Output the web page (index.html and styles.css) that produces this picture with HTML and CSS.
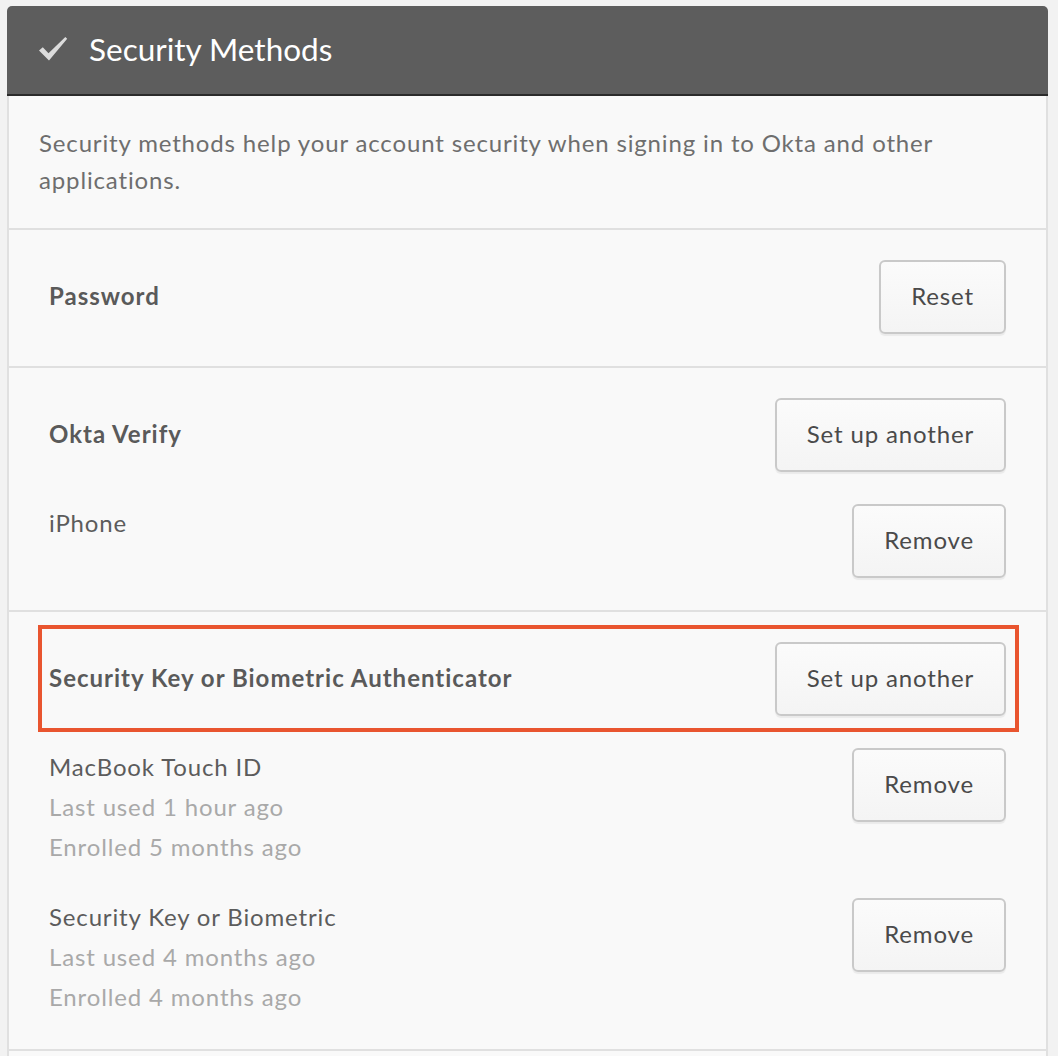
FILE: index.html
```html
<!DOCTYPE html>
<html lang="en">
<head>
<meta charset="utf-8">
<title>Security Methods</title>
<link rel="stylesheet" href="styles.css">
</head>
<body>
<div class="card">
  <div class="card-header">
    <svg class="check" width="30" height="26" viewBox="0 0 30 26" aria-hidden="true">
      <path d="M1 14.5 L4.8 11.3 L10.5 17.2 L27.3 1 L29.2 2.8 L11 24.5 Z" fill="#dcdcdc"/>
    </svg>
    <h2 class="card-title">Security Methods</h2>
  </div>
  <div class="card-body">
    <div class="section intro">
      <p class="intro-text">Security methods help your account security when signing in to Okta and other applications.</p>
    </div>

    <div class="section method">
      <div class="head-row">
        <span class="method-name">Password</span>
        <button class="btn">Reset</button>
      </div>
    </div>

    <div class="section method">
      <div class="head-row">
        <span class="method-name">Okta Verify</span>
        <button class="btn">Set up another</button>
      </div>
      <div class="sub-row">
        <div class="device">
          <div class="device-name">iPhone</div>
        </div>
        <button class="btn">Remove</button>
      </div>
    </div>

    <div class="section method highlighted">
      <div class="highlight-box"></div>
      <div class="head-row">
        <span class="method-name">Security Key or Biometric Authenticator</span>
        <button class="btn">Set up another</button>
      </div>
      <div class="sub-row">
        <div class="device">
          <div class="device-name">MacBook Touch ID</div>
          <div class="device-meta">Last used 1 hour ago</div>
          <div class="device-meta">Enrolled 5 months ago</div>
        </div>
        <button class="btn">Remove</button>
      </div>
      <div class="sub-row">
        <div class="device">
          <div class="device-name">Security Key or Biometric</div>
          <div class="device-meta">Last used 4 months ago</div>
          <div class="device-meta">Enrolled 4 months ago</div>
        </div>
        <button class="btn">Remove</button>
      </div>
    </div>
    <div class="section tail"></div>
  </div>
</div>
</body>
</html>
```

FILE: styles.css
```css
* { box-sizing: border-box; }

body {
  margin: 0;
  background: #f2f2f2;
  font-family: Lato, "Liberation Sans", sans-serif;
}

.card {
  margin: 6px 0 0 7px;
  width: 1041px;
}

.card-header {
  height: 90px;
  background: #5d5d5d;
  border-bottom: 2px solid #2b2b2b;
  border-radius: 5px 5px 0 0;
  display: flex;
  align-items: center;
  padding-left: 31px;
  padding-bottom: 2px;
}

.check {
  display: block;
  margin-right: 21px;
  filter: blur(0.4px);
}

.card-title {
  margin: 0;
  color: #ffffff;
  font-size: 31.5px;
  font-weight: 400;
}

.card-body {
  background: #f9f9f9;
  border-left: 2px solid #e0e0e0;
  border-right: 2px solid #e0e0e0;
}

.section {
  border-bottom: 2px solid #e0e0e0;
}

.intro {
  padding: 28px 30px 30px 30px;
}

.intro-text {
  margin: 0;
  font-size: 24px;
  line-height: 37px;
  letter-spacing: 0.85px;
  color: #6e6e6e;
}

.method {
  padding: 30px 40px 32px 40px;
  position: relative;
}

.head-row {
  display: flex;
  align-items: center;
  justify-content: space-between;
  height: 74px;
}

.method-name {
  font-size: 24px;
  font-weight: 700;
  letter-spacing: 1px;
  color: #5a5a5a;
  padding-bottom: 3px;
}

.sub-row {
  display: flex;
  justify-content: space-between;
  align-items: flex-start;
  margin-top: 31px;
}

.sub-row + .sub-row {
  margin-top: 30px;
}

.device {
  font-size: 24px;
  line-height: 40px;
  letter-spacing: 0.85px;
}

.device-name {
  color: #5c5c5c;
}

.device-meta {
  color: #a9a9a9;
}

.btn {
  height: 74px;
  padding: 0 30px 4px 30px;
  font-family: inherit;
  font-size: 24px;
  letter-spacing: 0.85px;
  color: #4a4a4a;
  background: linear-gradient(#fbfbfb, #f4f4f4);
  border: 2px solid #c9c9c9;
  border-radius: 6px;
  box-shadow: 0 2px 1px rgba(0, 0, 0, 0.06);
  cursor: pointer;
}

.sub-row .btn {
  margin-top: 1px;
}

.highlight-box {
  position: absolute;
  left: 29px;
  top: 13px;
  width: 981px;
  height: 107px;
  border: 4px solid #e9552f;
  pointer-events: none;
}

.tail {
  height: 8px;
  border-bottom: none;
}
```
